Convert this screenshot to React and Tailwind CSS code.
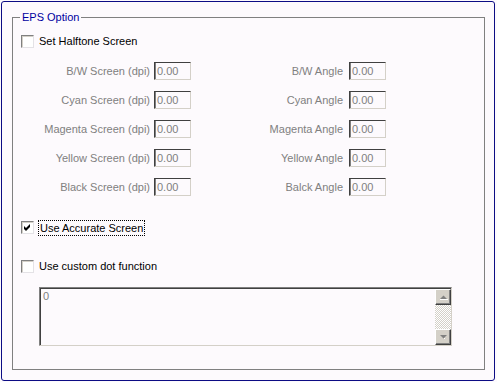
const screens = [
    { screen: "B/W Screen (dpi)", angle: "B/W Angle" },
    { screen: "Cyan Screen (dpi)", angle: "Cyan Angle" },
    { screen: "Magenta Screen (dpi)", angle: "Magenta Angle" },
    { screen: "Yellow Screen (dpi)", angle: "Yellow Angle" },
    { screen: "Black Screen (dpi)", angle: "Balck Angle" },
];

function CheckBox({ checked }) {
    return (
        <div className="w-[13px] h-[13px] shrink-0 border border-t-[#808080] border-l-[#808080] border-b-[#e4e2e6] border-r-[#e4e2e6] bg-white shadow-[inset_1px_1px_0_#d4d0c8]">
            {checked && (
                <svg width="11" height="11" viewBox="0 0 11 11">
                    <path d="M2 4 L4 6 L8 2 L8 5 L4 9 L2 7 Z" fill="#000" />
                </svg>
            )}
        </div>
    );
}

function ValueBox() {
    return (
        <div className="w-[37px] h-[18px] shrink-0 border border-t-[#404040] border-l-[#404040] border-b-[#d4d0c8] border-r-[#d4d0c8] shadow-[inset_1px_0_0_#808080] pl-[2px] flex items-center text-[#808080]">
            0.00
        </div>
    );
}

function ScrollButton({ up }) {
    return (
        <div className="w-[16px] h-[16px] bg-[#d4d0c8] border border-t-white border-l-white border-b-[#404040] border-r-[#404040] shadow-[inset_-1px_-1px_0_#808080] flex items-center justify-center">
            <svg width="9" height="6" viewBox="0 0 9 6">
                {up ? (
                    <>
                        <path d="M1 5 L8 5 L4.5 1.5 Z" fill="#808080" />
                        <rect x="1" y="5" width="8" height="1" fill="#fff" />
                    </>
                ) : (
                    <>
                        <path d="M1 1 L8 1 L4.5 4.5 Z" fill="#808080" />
                        <rect x="5" y="4" width="1" height="1" fill="#fff" />
                    </>
                )}
            </svg>
        </div>
    );
}

export default function App() {
    return (
        <div className="w-[497px] h-[382px] bg-[#fdfafd] pt-[1px] pl-[1px] font-['Liberation_Sans',Arial,sans-serif] text-[11px] leading-[13px] text-black">
            <div className="w-[494px] h-[380px] border border-[#0c0c84] rounded-[3px]">
                {/* EPS Option group */}
                <fieldset className="ml-[10px] mt-[9px] w-[473px] border border-[#808080] pb-[23px]">
                    <legend className="ml-[7px] px-[2px] text-[#0000a0] leading-[13px]">EPS Option</legend>

                    <div className="flex items-center gap-[5px] ml-[8px] mt-[11px] h-[13px]">
                        <CheckBox />
                        <span>Set Halftone Screen</span>
                    </div>

                    <div className="flex flex-col gap-[11px] mt-[14px]">
                        {screens.map((row) => (
                            <div key={row.screen} className="flex items-center h-[18px] text-[#808080]">
                                <span className="w-[137px] text-right">{row.screen}</span>
                                <div className="ml-[4px]">
                                    <ValueBox />
                                </div>
                                <span className="w-[152px] text-right">{row.angle}</span>
                                <div className="ml-[6px]">
                                    <ValueBox />
                                </div>
                            </div>
                        ))}
                    </div>

                    <div className="flex items-center gap-[4px] ml-[8px] mt-[25px] h-[13px]">
                        <CheckBox checked />
                        <span className="border border-dotted border-black px-[1px] leading-[14px]">Use Accurate Screen</span>
                    </div>

                    <div className="flex items-center gap-[5px] ml-[8px] mt-[26px] h-[13px]">
                        <CheckBox />
                        <span>Use custom dot function</span>
                    </div>

                    {/* dot function text box */}
                    <div className="ml-[26px] mt-[14px] w-[413px] h-[59px] flex border border-t-[#808080] border-l-[#808080] border-b-[#d4d0c8] border-r-[#d4d0c8] shadow-[inset_1px_1px_0_#404040]">
                        <div className="flex-1 pl-[3px] pt-[2px] text-[#808080]">0</div>
                        <div className="w-[16px] mt-[1px] flex flex-col">
                            <ScrollButton up />
                            <div className="flex-1 bg-[repeating-conic-gradient(#d4d0c8_0_25%,#ffffff_0_50%)] bg-[length:2px_2px]" />
                            <ScrollButton />
                        </div>
                    </div>
                </fieldset>
            </div>
        </div>
    );
}
